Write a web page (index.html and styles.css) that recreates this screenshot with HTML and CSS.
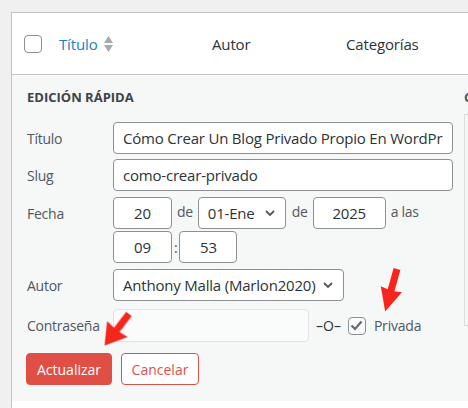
FILE: index.html
```html
<!DOCTYPE html>
<html lang="es">
<head>
<meta charset="utf-8">
<title>Edición rápida</title>
<link rel="stylesheet" href="styles.css">
</head>
<body>
<div class="page">
  <div class="table">
    <div class="thead">
      <span class="cb"></span>
      <span class="col col-title"><a class="sort-link">Título</a>
        <svg class="sort" width="9" height="17" viewBox="0 0 9 17"><path d="M4.5 0 L9 7 L0 7 Z" fill="#a7aaad"/><path d="M0 9 L9 9 L4.5 16 Z" fill="#a7aaad"/></svg>
      </span>
      <span class="col col-author">Autor</span>
      <span class="col col-cat">Categorías</span>
    </div>
    <div class="qe">
      <div class="qe-main">
        <h2 class="qe-title">EDICIÓN RÁPIDA</h2>
        <div class="field f-title">
          <span class="label">Título</span>
          <input class="inp inp-wide" type="text" value="Cómo Crear Un Blog Privado Propio En WordPress">
        </div>
        <div class="field f-slug">
          <span class="label">Slug</span>
          <input class="inp inp-wide" type="text" value="como-crear-privado">
        </div>
        <div class="field f-date">
          <span class="label">Fecha</span>
          <div class="date">
            <div class="date-line">
              <input class="inp inp-day" type="text" value="20">
              <span class="sep sep-de1">de</span>
              <div class="sel sel-month"><span>01-Ene</span><svg width="10" height="6" viewBox="0 0 10 6"><path d="M1 1 L5 5 L9 1" fill="none" stroke="#50575e" stroke-width="1.8"/></svg></div>
              <span class="sep sep-de2">de</span>
              <input class="inp inp-year" type="text" value="2025">
              <span class="sep sep-alas">a las</span>
            </div>
            <div class="date-line line2">
              <input class="inp inp-day" type="text" value="09">
              <span class="sep sep-colon">:</span>
              <input class="inp inp-min" type="text" value="53">
            </div>
          </div>
        </div>
        <div class="field f-author">
          <span class="label">Autor</span>
          <div class="sel sel-author"><span>Anthony Malla (Marlon2020)</span><svg width="10" height="6" viewBox="0 0 10 6"><path d="M1 1 L5 5 L9 1" fill="none" stroke="#50575e" stroke-width="1.8"/></svg></div>
        </div>
        <div class="field f-pass">
          <span class="label">Contraseña</span>
          <input class="inp inp-pass" type="text" value="" disabled>
          <span class="or">–O–</span>
          <span class="chk"><svg width="13" height="11" viewBox="0 0 13 11"><path d="M1.5 5.5 L5 9 L11.5 1.5" fill="none" stroke="#646970" stroke-width="2.2"/></svg></span>
          <span class="priv">Privada</span>
        </div>
        <div class="buttons">
          <button class="btn btn-primary" type="button">Actualizar</button>
          <button class="btn btn-cancel" type="button">Cancelar</button>
        </div>
      </div>
      <div class="qe-side">
        <h2 class="qe-title side-title">CATEGORÍAS</h2>
        <div class="side-box"></div>
      </div>
    </div>
  </div>
  <svg class="arrows" width="468" height="408" viewBox="0 0 468 408">
    <defs>
      <filter id="soft" x="-20%" y="-20%" width="140%" height="140%">
        <feGaussianBlur stdDeviation="0.6"/>
      </filter>
    </defs>
    <g filter="url(#soft)" fill="#f7261c">
      <polygon transform="translate(397 269) rotate(15.6)" points="-3.5,0 3.5,0 3.5,22 11,21 0,44 -11,21 -3.5,22"/>
      <polygon transform="translate(129 314) rotate(37.7)" points="-3.5,0 3.5,0 3.5,20 13,19 0,40 -13,19 -3.5,20"/>
    </g>
  </svg>
</div>
</body>
</html>
```

FILE: styles.css
```css
* { box-sizing: border-box; }

html, body {
  margin: 0;
  padding: 0;
}

body {
  background: #f0f0f1;
  font-family: "Open Sans", "Noto Sans", sans-serif;
  color: #2c3338;
  font-size: 14px;
  width: 468px;
  height: 408px;
  overflow: hidden;
}

.page {
  position: relative;
  width: 468px;
  height: 408px;
  padding: 12px 0 0 11px;
}

.table {
  background: #fff;
  border-left: 1px solid #c3c4c7;
  border-top: 1px solid #c3c4c7;
  height: 100%;
  width: 600px;
}

.thead {
  display: flex;
  align-items: center;
  height: 62px;
  border-bottom: 1px solid #c3c4c7;
  padding-left: 12px;
  font-size: 15px;
  letter-spacing: -0.15px;
}

.cb {
  width: 18px;
  height: 18px;
  border: 1px solid #8c8f94;
  border-radius: 4px;
  background: #fff;
  margin-right: 17px;
}

.col-title {
  display: flex;
  align-items: center;
  width: 153px;
}

.sort-link {
  color: #1582c3;
}

.sort {
  margin-left: 6px;
  margin-top: 1px;
}

.col-author { width: 134px; }

.qe {
  display: flex;
  background: #f6f7f7;
  height: 326px;
}

.qe-main {
  width: 442px;
  padding: 13px 0 0 15px;
}

.qe-title {
  margin: 0;
  font-size: 13px;
  line-height: 18px;
  font-weight: 700;
  color: #3c434a;
}

.field {
  display: flex;
  align-items: center;
}

.label {
  width: 86px;
  flex: none;
  color: #50575e;
  font-size: 14px;
  letter-spacing: -0.25px;
}

.f-title { margin-top: 16px; }
.f-slug { margin-top: 5px; }
.f-date { margin-top: 6px; align-items: flex-start; }
.f-date .label { margin-top: 7px; }
.f-author { margin-top: 6px; }
.f-pass { margin-top: 8px; }

.inp {
  font-family: inherit;
  font-size: 15px;
  letter-spacing: -0.2px;
  color: #2c3338;
  height: 32px;
  border: 1px solid #8c8f94;
  border-radius: 4px;
  background: #fff;
  padding: 0 9px;
  margin: 0;
  outline: none;
}

.inp-wide { width: 340px; }

.date-line {
  display: flex;
  align-items: center;
}

.line2 { margin-top: 2px; }

.inp-day { width: 59px; text-align: center; }
.inp-year { width: 73px; text-align: center; }
.inp-min { width: 58px; text-align: center; }

.sep {
  color: #50575e;
  font-size: 14px;
  letter-spacing: -0.3px;
  align-self: flex-start;
  margin-top: 5px;
}

.sep-de1 { margin-left: 5px; margin-right: 5px; }
.sep-de2 { margin-left: 6px; margin-right: 5px; }
.sep-alas { margin-left: 5px; }
.line2 .sep-colon { margin: 0 2px 0 2px; align-self: center; }

.sel {
  display: flex;
  align-items: center;
  justify-content: space-between;
  height: 32px;
  border: 1px solid #8c8f94;
  border-radius: 4px;
  background: #fff;
  font-size: 15px;
  letter-spacing: -0.2px;
  color: #2c3338;
  padding: 0 10px 0 9px;
}

.sel-month { width: 88px; }
.sel-author { width: 231px; }

.inp-pass {
  width: 196px;
  height: 33px;
  border-color: #e2e3e4;
  background: #fafbfb;
}

.or {
  margin-left: 7px;
  font-size: 14px;
  color: #2c3338;
}

.chk {
  width: 18px;
  height: 18px;
  border: 1px solid #8c8f94;
  border-radius: 4px;
  margin-left: 7px;
  display: flex;
  align-items: center;
  justify-content: center;
  background: #fafbfb;
}

.priv {
  margin-left: 8px;
  color: #50575e;
  font-size: 14px;
  letter-spacing: -0.2px;
}

.buttons {
  display: flex;
  gap: 9px;
  margin-top: 11px;
  margin-left: -1px;
}

.btn {
  font-family: inherit;
  font-size: 14px;
  height: 32px;
  border-radius: 4px;
  padding: 0;
  margin: 0;
}

.btn-primary {
  width: 86px;
  background: #e04f46;
  border: 1px solid #e04f46;
  color: #fff;
}

.btn-cancel {
  width: 78px;
  background: #fff;
  border: 1px solid #d9534f;
  color: #e0524d;
}

.qe-side {
  padding: 13px 0 0 11px;
}

.side-title {
  color: #50575e;
  white-space: nowrap;
}

.side-box {
  margin-top: 8px;
  width: 200px;
  height: 212px;
  border: 1px solid #dcdcde;
  background: #f6f7f7;
}

.arrows {
  position: absolute;
  left: 0;
  top: 0;
  pointer-events: none;
}
```
